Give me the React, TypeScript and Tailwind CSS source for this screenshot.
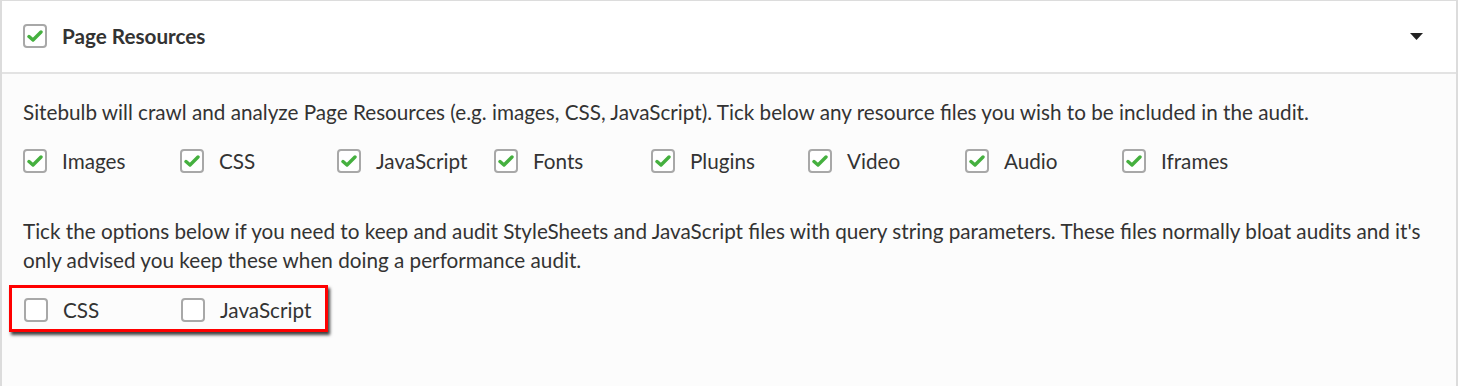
import React from "react";

function Box({ checked }: { checked: boolean }) {
  return (
    <span className="flex h-[24px] w-[24px] shrink-0 items-center justify-center rounded-[4px] border-2 border-[#a8a8a8] bg-white">
      {checked && (
        <svg width="16" height="14" viewBox="0 0 16 14">
          <polyline
            points="2,7.5 6,11 14,3"
            fill="none"
            stroke="#45b03f"
            strokeWidth="3.4"
            strokeLinecap="round"
            strokeLinejoin="round"
          />
        </svg>
      )}
    </span>
  );
}

function Item({ label, checked }: { label: string; checked: boolean }) {
  return (
    <div className="flex w-[157px] items-center gap-[15px]">
      <Box checked={checked} />
      <span className="whitespace-nowrap text-[20.7px] leading-[24px] text-[#333]">{label}</span>
    </div>
  );
}

export default function App() {
  const items = ["Images", "CSS", "JavaScript", "Fonts", "Plugins", "Video", "Audio", "Iframes"];
  return (
    <div
      className="h-[386px] w-[1458px] border-x-2 border-t border-[#dcdcdc] bg-[#fcfcfc]"
      style={{ fontFamily: "Lato, 'Liberation Sans', sans-serif" }}
    >
      <div className="flex h-[73px] items-center justify-between border-b-2 border-[#e3e3e3] bg-white pl-[21px] pr-[33px]">
        <div className="flex items-center gap-[15px]">
          <Box checked />
          <span className="text-[20.7px] font-bold text-[#333]">Page Resources</span>
        </div>
        <svg width="13" height="7" viewBox="0 0 13 7">
          <polygon points="0,0 13,0 6.5,7" fill="#222" />
        </svg>
      </div>
      <div className="pl-[21px] pt-[24px] text-[20.7px] leading-[29px] text-[#333]">
        <p>
          Sitebulb will crawl and analyze Page Resources (e.g. images, CSS, JavaScript). Tick below any resource files you wish to be included in the audit.
        </p>
        <div className="mt-[22px] flex">
          {items.map((l) => (
            <Item key={l} label={l} checked />
          ))}
        </div>
        <p className="mt-[44px]">
          Tick the options below if you need to keep and audit StyleSheets and JavaScript files with query string parameters. These files normally bloat audits and it's only advised you keep these when doing a performance audit.
        </p>
        <div className="-ml-[14px] mt-[10px] inline-flex border-[3px] border-[#ff0000] pb-[7px] pl-[12px] pr-[14px] pt-[10px] shadow-[2px_3px_3px_rgba(0,0,0,0.75)]">
          <Item label="CSS" checked={false} />
          <div className="flex items-center gap-[15px]">
            <Box checked={false} />
            <span className="whitespace-nowrap text-[20.7px] leading-[24px] text-[#333]">JavaScript</span>
          </div>
        </div>
      </div>
    </div>
  );
}
